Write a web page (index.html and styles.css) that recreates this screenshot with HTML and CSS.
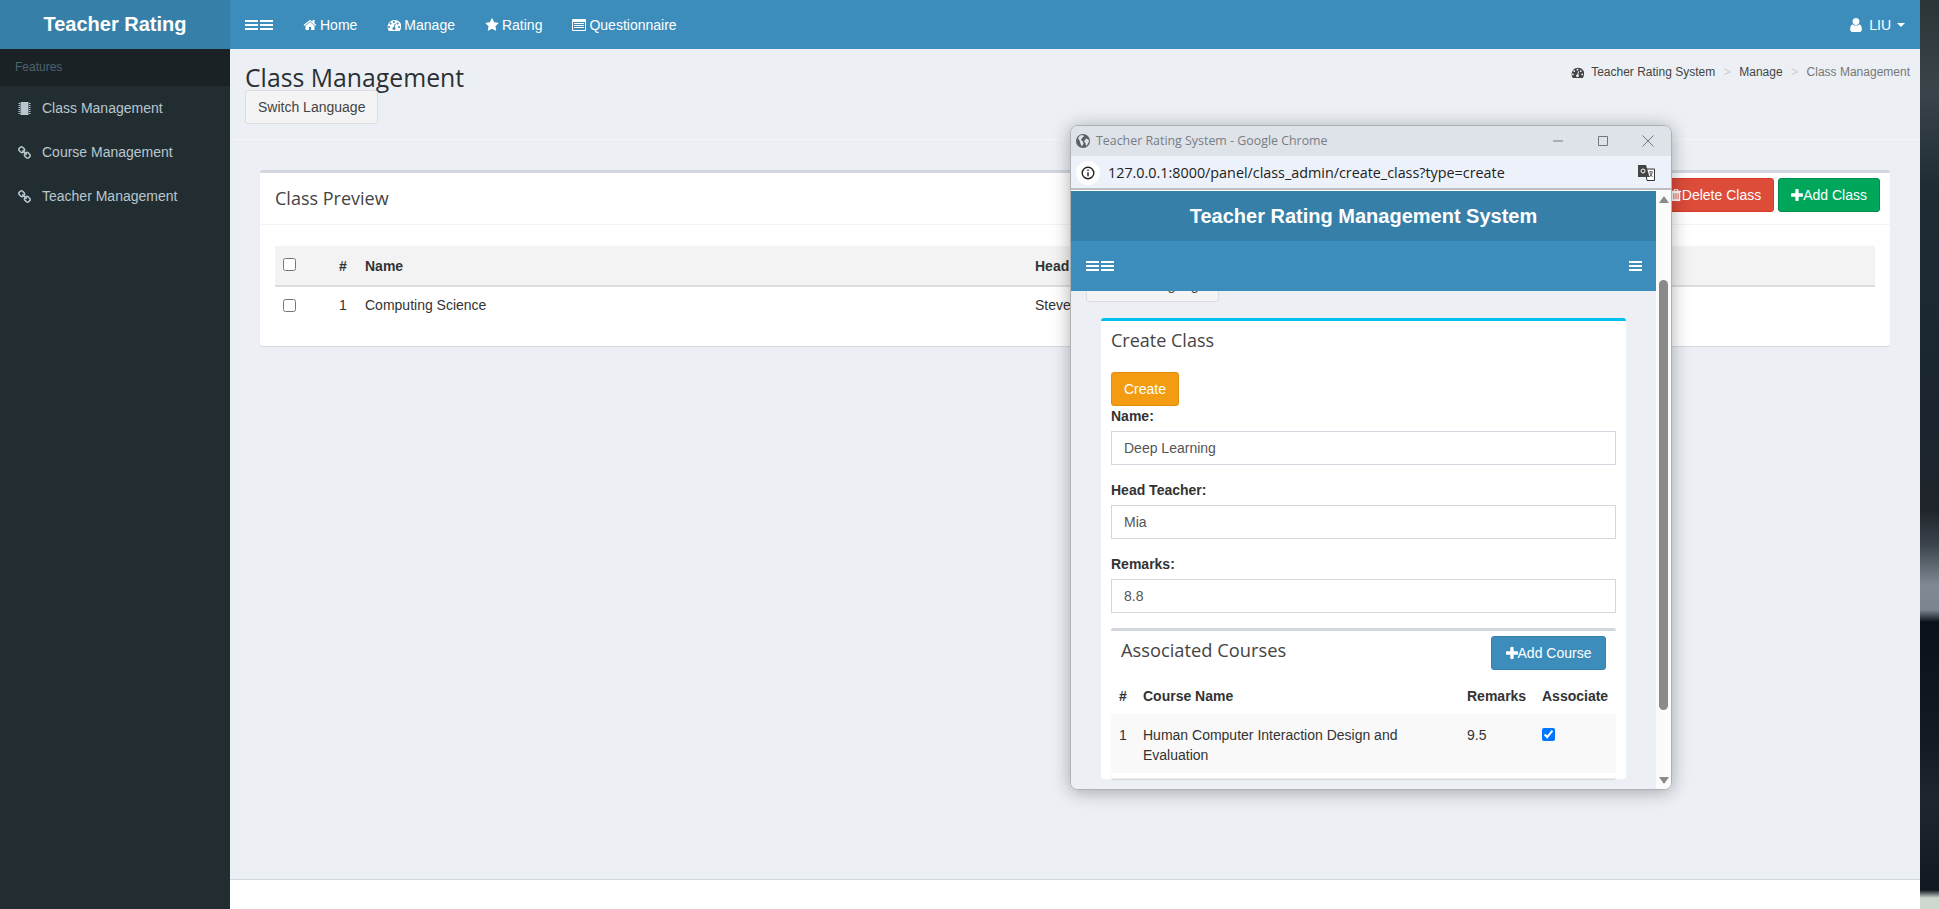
FILE: index.html
```html
<!DOCTYPE html>
<html>
<head>
  <meta charset="utf-8">
  <title>Teacher Rating</title>
  <link rel="stylesheet" href="styles.css">
</head>
<body>

<svg class="defs">
  <symbol id="i-home" viewBox="0 0 1792 1792"><path d="M1472 992v480q0 26-19 45t-45 19h-384v-384H768v384H384q-26 0-45-19t-19-45V992q0-1 .5-3t.5-3l575-474 575 474q1 2 1 6zm223-69l-62 74q-8 9-21 11h-3q-13 0-21-7L896 424l-692 577q-12 8-24 7-13-2-21-11l-62-74q-8-10-7-23.500t11-21.500l719-599q32-26 76-26t76 26l244 204V288q0-14 9-23t23-9h192q14 0 23 9t9 23v408l219 182q10 8 11 21.500t-7 23.500z"/></symbol>
  <symbol id="i-gauge" viewBox="0 0 1792 1792"><path fill-rule="evenodd" d="M384 1152q0-53-37.500-90.500t-90.500-37.500-90.500 37.500-37.500 90.500 37.500 90.500 90.500 37.500 90.500-37.500 37.500-90.500zm192-448q0-53-37.500-90.500t-90.500-37.500-90.500 37.500-37.500 90.500 37.500 90.500 90.500 37.500 90.500-37.500 37.500-90.500zm428 481l101-382q6-26-7.500-48.500t-38.500-29.500-48 6.500-30 39.500l-101 382q-60 5-107 43.500t-63 98.500q-20 77 20 146t117 89 146-20 89-117q16-60-6-117t-72-91zm660-33q0-53-37.500-90.500t-90.500-37.500-90.500 37.500-37.500 90.500 37.500 90.500 90.500 37.500 90.500-37.500 37.500-90.500zm-640-640q0-53-37.500-90.500t-90.500-37.500-90.500 37.500-37.500 90.500 37.500 90.500 90.500 37.500 90.500-37.500 37.500-90.500zm448 192q0-53-37.500-90.500t-90.500-37.500-90.500 37.500-37.500 90.500 37.500 90.500 90.500 37.500 90.500-37.500 37.500-90.500zm320 448q0 261-141 483-19 29-54 29H275q-35 0-54-29-141-221-141-483 0-182 71-348t191-286 286-191 348-71 348 71 286 191 191 286 71 348z"/></symbol>
  <symbol id="i-star" viewBox="0 0 1792 1792"><path d="M1728 647q0 22-26 48l-363 354 86 500q1 7 1 20 0 21-10.500 35.500t-30.500 14.500q-19 0-40-12l-449-236-449 236q-22 12-40 12-21 0-31.500-14.500t-10.500-35.500q0-6 2-20l86-500-364-354q-25-27-25-48 0-37 56-46l502-73 225-455q19-41 49-41t49 41l225 455 502 73q56 9 56 46z"/></symbol>
  <symbol id="i-list" viewBox="0 0 14 12"><path fill-rule="evenodd" d="M1 0h12a1 1 0 0 1 1 1v10a1 1 0 0 1-1 1H1a1 1 0 0 1-1-1V1a1 1 0 0 1 1-1zm0 3v8h12V3zm1 1h10v1H2zm0 2h10v1H2zm0 2h10v1H2z"/></symbol>
  <symbol id="i-user" viewBox="256 128 1280 1536"><path d="M1536 1399q0 109-62.500 187t-150.500 78H469q-88 0-150.500-78T256 1399q0-85 8.500-160.500t31.500-152 58.500-131 94-89T583 832q131 128 313 128t313-128q76 0 134.500 34.500t94 89 58.500 131 31.500 152 8.500 160.500zm-256-887q0 159-112.500 271.500T896 896 624.500 783.500 512 512t112.500-271.500T896 128t271.500 112.500T1280 512z"/></symbol>
  <symbol id="i-plus" viewBox="192 128 1408 1408"><path d="M1600 736v192q0 40-28 68t-68 28h-416v416q0 40-28 68t-68 28H800q-40 0-68-28t-28-68v-416H288q-40 0-68-28t-28-68V736q0-40 28-68t68-28h416V224q0-40 28-68t68-28h192q40 0 68 28t28 68v416h416q40 0 68 28t28 68z"/></symbol>
  <symbol id="i-link" viewBox="80 16 1632 1632"><path fill-rule="evenodd" d="M1520 1216q0-40-28-68l-208-208q-28-28-68-28-42 0-72 32 3 3 19 18.500t21.500 21.500 15 19 13 25.500 3.500 27.500q0 40-28 68t-68 28q-15 0-27.500-3.500t-25.500-13-19-15-21.500-21.500-18.500-19q-33 31-33 73 0 40 28 68l206 207q27 27 68 27 40 0 68-26l147-146q28-28 28-67zM817 511q0-40-28-68L583 236q-28-28-68-28-39 0-68 27L300 381q-28 28-28 67 0 40 28 68l208 208q27 27 68 27 42 0 72-31-3-3-19-18.500T607.500 680t-15-19-13-25.500T576 608q0-40 28-68t68-28q15 0 27.500 3.500t25.500 13 19 15 21.500 21.500 18.500 19q33-31 33-73zm895 705q0 120-85 203l-147 146q-83 83-203 83-121 0-204-85l-206-207q-83-83-83-203 0-123 88-209l-88-88q-86 88-208 88-120 0-204-84L164 652q-84-84-84-204t85-203L312 99q83-83 203-83 121 0 204 85l206 207q83 83 83 203 0 123-88 209l88 88q86-88 208-88 120 0 204 84l208 208q84 84 84 204z"/></symbol>
  <symbol id="i-chip" viewBox="0 0 12 13"><path d="M2 0h8v13H2zM0 1h1.500v1H0zm0 2h1.500v1H0zm0 2h1.500v1H0zm0 2h1.500v1H0zm0 2h1.500v1H0zm0 2h1.500v1H0zM10.500 1H12v1h-1.500zm0 2H12v1h-1.500zm0 2H12v1h-1.500zm0 2H12v1h-1.500zm0 2H12v1h-1.500zm0 2H12v1h-1.500z"/></symbol>
  <symbol id="i-trash" viewBox="0 0 12 14"><path fill-rule="evenodd" d="M4 0h4l1 2h3v1.500h-1V14H1V3.500H0V2h3zm.8 1L4.400 2h3.200l-.4-1zM3 5v7h1V5zm2.500 0v7h1V5zM8 5v7h1V5z"/></symbol>
  <symbol id="i-bars" viewBox="0 0 13 10"><path d="M0 0h13v2H0zm0 4h13v2H0zm0 4h13v2H0z"/></symbol>
  <symbol id="i-globe" viewBox="0 0 14 14"><path d="M7 0a7 7 0 1 0 0 14A7 7 0 0 0 7 0zM2 4l2-2.500L7 1l1 1.500L6 4 5 6l2 1.500.500 2L6 12.500 4.500 10 4 7.500zm8 .500l2.500 1 .500 2-1.500 3L10 12l-.500-3-1.500-1.500z"/></symbol>
</svg>

<div class="desktop">
  <div class="page">

    <header class="topbar">
      <div class="brand">Teacher Rating</div>
      <nav class="topnav">
        <a class="toggle"><svg class="bars"><use href="#i-bars"/></svg><svg class="bars"><use href="#i-bars"/></svg></a>
        <a><svg class="ico"><use href="#i-home"/></svg>Home</a>
        <a><svg class="ico"><use href="#i-gauge"/></svg>Manage</a>
        <a><svg class="ico"><use href="#i-star"/></svg>Rating</a>
        <a><svg class="ico"><use href="#i-list"/></svg>Questionnaire</a>
      </nav>
      <div class="usermenu"><svg class="ico"><use href="#i-user"/></svg>LIU<span class="caret"></span></div>
    </header>

    <div class="main">
      <aside class="sidebar">
        <div class="side-head">Features</div>
        <a class="side-item"><svg class="ico"><use href="#i-chip"/></svg>Class Management</a>
        <a class="side-item"><svg class="ico"><use href="#i-link"/></svg>Course Management</a>
        <a class="side-item"><svg class="ico"><use href="#i-link"/></svg>Teacher Management</a>
      </aside>

      <div class="content">
        <section class="content-head">
          <div>
            <h1>Class Management</h1>
            <button class="btn btn-default">Switch Language</button>
          </div>
          <ol class="crumbs">
            <li><svg class="ico"><use href="#i-gauge"/></svg>Teacher Rating System</li>
            <li class="sep">&gt;</li>
            <li>Manage</li>
            <li class="sep">&gt;</li>
            <li class="active">Class Management</li>
          </ol>
        </section>

        <section class="box preview">
          <div class="box-head">
            <h3>Class Preview</h3>
            <div class="tools">
              <button class="btn btn-red"><svg class="ico"><use href="#i-trash"/></svg>Delete Class</button>
              <button class="btn btn-green"><svg class="ico"><use href="#i-plus"/></svg>Add Class</button>
            </div>
          </div>
          <div class="box-body">
            <table class="grid">
              <thead>
                <tr>
                  <th class="c-check"><input type="checkbox"></th>
                  <th class="c-num">#</th>
                  <th class="c-name">Name</th>
                  <th>Head Teacher</th>
                </tr>
              </thead>
              <tbody>
                <tr>
                  <td><input type="checkbox"></td>
                  <td><b class="rownum">1</b></td>
                  <td>Computing Science</td>
                  <td>Steve</td>
                </tr>
              </tbody>
            </table>
          </div>
        </section>

        <footer class="foot"></footer>
      </div>
    </div>

    <!-- popup window -->
    <div class="popup">
      <div class="pop-title">
        <svg class="pop-globe"><use href="#i-globe"/></svg>
        <span class="pop-name">Teacher Rating System - Google Chrome</span>
        <svg class="winbtn" viewBox="0 0 12 12"><path d="M1 6h10"/></svg>
        <svg class="winbtn" viewBox="0 0 12 12"><path d="M1.500 1.500h9v9h-9z"/></svg>
        <svg class="winbtn" viewBox="0 0 12 12"><path d="M.5.500l11 11M11.500.500l-11 11"/></svg>
      </div>
      <div class="pop-addr">
        <span class="info"><svg viewBox="0 0 14 14"><circle cx="7" cy="7" r="5.800"/><path d="M7 6.200v4M7 3.600v1.400"/></svg></span>
        <span class="url">127.0.0.1:8000/panel/class_admin/create_class?type=create</span>
        <svg class="translate" viewBox="0 0 17 16"><path class="tr-back" d="M7 4h9.500v11.500H9z"/><path class="tr-front" d="M0 0h8l3.500 12H0z"/><circle class="tr-g" cx="5" cy="6" r="2"/><path class="tr-x" d="M11 7h4M13 6v1M11.500 12l3-4.500M12 8l2.500 4"/></svg>
      </div>
      <div class="pop-view">
        <div class="pop-page">
          <div class="pop-brand">Teacher Rating Management System</div>
          <div class="pop-nav">
            <span><svg class="bars"><use href="#i-bars"/></svg><svg class="bars"><use href="#i-bars"/></svg></span>
            <svg class="bars"><use href="#i-bars"/></svg>
          </div>
          <div class="pop-content">
            <button class="btn btn-default pop-switch">Switch Language</button>
            <section class="box create">
              <div class="box-head">
                <h3>Create Class</h3>
              </div>
              <div class="form">
                <button class="btn btn-orange">Create</button>
                <label>Name:</label>
                <input class="field" type="text" value="Deep Learning">
                <label>Head Teacher:</label>
                <input class="field" type="text" value="Mia">
                <label>Remarks:</label>
                <input class="field" type="text" value="8.8">

                <section class="box courses">
                  <div class="box-head">
                    <h3>Associated Courses</h3>
                    <button class="btn btn-blue"><svg class="ico"><use href="#i-plus"/></svg>Add Course</button>
                  </div>
                  <table class="grid">
                    <thead>
                      <tr>
                        <th class="p-num">#</th>
                        <th class="p-name">Course Name</th>
                        <th class="p-rem">Remarks</th>
                        <th>Associate</th>
                      </tr>
                    </thead>
                    <tbody>
                      <tr>
                        <td>1</td>
                        <td>Human Computer Interaction Design and Evaluation</td>
                        <td>9.5</td>
                        <td><input type="checkbox" checked></td>
                      </tr>
                    </tbody>
                  </table>
                </section>
              </div>
            </section>
          </div>
        </div>
        <div class="scrollbar">
          <span class="arrow-up"></span>
          <span class="thumb"></span>
          <span class="arrow-down"></span>
        </div>
      </div>
    </div>

  </div>
  <div class="wallpaper"></div>
</div>

</body>
</html>
```

FILE: styles.css
```css
* { box-sizing: border-box; }
html, body { margin: 0; padding: 0; height: 100%; overflow: hidden; }
body { font-family: "Liberation Sans", Arial, sans-serif; font-size: 14px; line-height: 20px; color: #333; }
.defs { display: none; }
.ico { width: 14px; height: 14px; fill: currentColor; flex: none; }
.bars { width: 13px; height: 10px; fill: #fff; display: block; }

.desktop { display: flex; height: 909px; }
.page { position: relative; width: 1920px; flex: none; display: flex; flex-direction: column; background: #ecf0f5; }
.wallpaper {
  flex: 1;
  background: linear-gradient(180deg, #2b3436 0, #3a444a 90px, #1f2c34 190px, #1a2530 400px, #20242a 510px, #3c444c 545px, #7f8a94 585px, #7a8590 610px, #0a1119 622px, #141a22 740px, #20262e 800px, #121820 890px, #cfd8ce 898px);
}

/* top bar */
.topbar { display: flex; height: 49px; background: #3c8dbc; color: #fff; flex: none; }
.brand { width: 230px; background: #367fa9; text-align: center; font-size: 20px; font-weight: bold; line-height: 49px; }
.topnav { display: flex; align-items: center; }
.topnav a { display: flex; align-items: center; gap: 3px; padding: 0 15px; }
.toggle.toggle { gap: 2px; }
.usermenu { margin-left: auto; padding-right: 15px; display: flex; align-items: center; }
.usermenu .ico { width: 12px; margin-right: 7px; }
.caret { margin-left: 6px; border-top: 4px solid #fff; border-left: 4px solid transparent; border-right: 4px solid transparent; }

/* sidebar */
.main { flex: 1; display: flex; min-height: 0; }
.sidebar { width: 230px; flex: none; background: #222d32; color: #b8c7ce; }
.side-head { height: 37px; padding: 8px 15px; background: #1a2226; color: #4b646f; font-size: 12px; }
.side-item { display: flex; align-items: center; height: 44px; padding-left: 18px; }
.side-item .ico { width: 13px; height: 13px; margin-right: 11px; }

/* content */
.content { flex: 1; display: flex; flex-direction: column; }
.content-head { display: flex; justify-content: space-between; align-items: flex-start; height: 91px; padding: 15px 10px 0 15px; border-bottom: 1px solid #f3f5f8; }
h1 { margin: 0; font-family: "Open Sans", sans-serif; font-size: 24.800px; font-weight: 400; line-height: 26px; color: #2c3033; }
.crumbs { display: flex; margin: 0; padding: 0; list-style: none; font-size: 12px; line-height: 16px; color: #444; }
.crumbs li { display: flex; align-items: center; }
.crumbs .ico { width: 13px; height: 13px; margin-right: 7px; }
.crumbs .sep { margin: 0 8.500px; color: #ccc; }
.crumbs .active { color: #777; }

.btn { display: inline-flex; align-items: center; justify-content: center; height: 34px; padding: 6px 12px; border: 1px solid transparent; border-radius: 3px; font: inherit; color: #fff; white-space: nowrap; }
.btn .ico { width: 12px; height: 12px; }
.btn-default { background: #f4f4f4; border-color: #ddd; color: #444; }
.btn-red { background: #dd4b39; border-color: #d73925; }
.btn-green { background: #00a65a; border-color: #008d4c; }
.btn-orange { background: #f39c12; border-color: #e08e0b; }
.btn-blue { background: #3c8dbc; border-color: #367fa9; }

.box { background: #fff; border-top: 3px solid #d2d6de; border-radius: 3px; box-shadow: 0 1px 1px rgba(0,0,0,.1); }
.box-head { display: flex; justify-content: space-between; align-items: flex-start; }
h3 { margin: 0; font-family: "Open Sans", sans-serif; font-size: 18px; font-weight: 400; line-height: 20px; color: #444; }

.preview { margin: 30px 30px 0; }
.preview .box-head { height: 52px; padding: 5px 10px 0 15px; border-bottom: 1px solid #f4f4f4; }
.preview h3 { margin-top: 10px; }
.tools { display: flex; gap: 4px; }
.preview .box-body { padding: 21px 15px 23px; }

table.grid { width: 100%; border-collapse: collapse; table-layout: fixed; }
.grid th, .grid td { padding: 8px; text-align: left; vertical-align: top; }
.grid input { display: block; margin: 0; }
.preview .grid thead { background: #f3f3f3; }
.preview .grid th { border-bottom: 2px solid #ddd; height: 40px; padding-top: 10px; }
.preview .grid th input { margin-top: 2px; }
.preview .grid td { height: 37px; }
.preview .grid td input { margin-top: 4px; }
.c-check { width: 56px; }
.c-num { width: 26px; }
.c-name { width: 670px; }
.rownum { font-weight: normal; color: #333; }

.foot { margin-top: auto; height: 30px; background: #fff; border-top: 1px solid #d2d6de; }

/* popup window */
.popup { position: absolute; left: 1070px; top: 125px; width: 602px; height: 665px; display: flex; flex-direction: column; overflow: hidden; background: #fff; border: 1px solid #aeb1b5; border-radius: 8px; box-shadow: 0 2px 18px rgba(0,0,0,.32); }
.pop-title { display: flex; align-items: center; height: 30px; flex: none; padding: 0 17px 0 5px; background: #dee2e9; }
.pop-globe { width: 14px; height: 14px; fill: #5c5f64; margin-right: 6px; }
.pop-name { flex: 1; font-family: "Open Sans", sans-serif; font-size: 12.400px; color: #797d83; }
.winbtn { width: 12px; height: 12px; fill: none; stroke: #777; margin-left: 33px; }
.pop-addr { display: flex; align-items: center; height: 34px; flex: none; padding: 1px 16px 0 5px; background: #edf1fa; border-bottom: 2px solid #bcbfc2; }
.info { display: flex; align-items: center; justify-content: center; width: 24px; height: 24px; border-radius: 50%; background: #fff; margin-right: 8px; }
.info svg { width: 14px; height: 14px; fill: none; stroke: #222; stroke-width: 1.400; }
.url { flex: 1; font-family: "Open Sans", sans-serif; font-size: 14.350px; color: #222; }
.translate { width: 17px; height: 16px; }
.tr-back { fill: #fff; stroke: #333; }
.tr-front { fill: #444; }
.tr-g { fill: none; stroke: #fff; }
.tr-x { fill: none; stroke: #333; stroke-width: .8; }

.pop-view { flex: 1; min-height: 0; display: flex; padding-top: 1px; background: #fff; }
.pop-page { flex: 1; min-width: 0; display: flex; flex-direction: column; background: #ecf0f5; overflow: hidden; }
.pop-brand { height: 50px; flex: none; background: #367fa9; color: #fff; text-align: center; font-size: 20px; font-weight: bold; line-height: 50px; }
.pop-nav { position: relative; z-index: 1; height: 50px; flex: none; display: flex; justify-content: space-between; align-items: center; padding: 0 14px 0 15px; background: #3c8dbc; }
.pop-nav span { display: flex; gap: 2px; }
.pop-content { padding: 0 30px; }
.pop-switch { display: flex; margin: -23px 0 0 -15px; }

.create { margin-top: 16px; border-top-color: #00c0ef; box-shadow: none; }
.create > .box-head { padding: 9px 10px 22px; }
.form { padding: 0 10px; }
.form label { display: block; margin-bottom: 5px; font-weight: bold; }
.form .btn-orange { display: flex; }
.field { display: block; width: 100%; height: 34px; margin-bottom: 15px; padding: 6px 12px; border: 1px solid #d2d6de; font: inherit; color: #555; outline: none; }
.courses .box-head { padding: 5px 10px 8px; }
.courses h3 { margin-top: 4px; font-size: 18.300px; }
.courses .btn-blue { width: 115px; }
.courses { border-bottom: 1px solid #eee; padding-bottom: 5px; }
.courses tbody tr { background: #f9f9f9; }
.courses .grid td { padding: 11px 8px 8px; }
.courses .grid td input { margin-top: 3px; }
.p-num { width: 24px; }
.p-name { width: 324px; }
.p-rem { width: 75px; }

.scrollbar { position: relative; width: 15px; flex: none; background: #fbfbfb; }
.thumb { position: absolute; left: 3px; top: 89px; width: 9px; height: 430px; border-radius: 5px; background: #8a8a8a; }
.arrow-up, .arrow-down { position: absolute; left: 2.500px; border-left: 5px solid transparent; border-right: 5px solid transparent; }
.arrow-up { top: 5px; border-bottom: 7px solid #8a8a8a; }
.arrow-down { bottom: 5px; border-top: 7px solid #8a8a8a; }
```
